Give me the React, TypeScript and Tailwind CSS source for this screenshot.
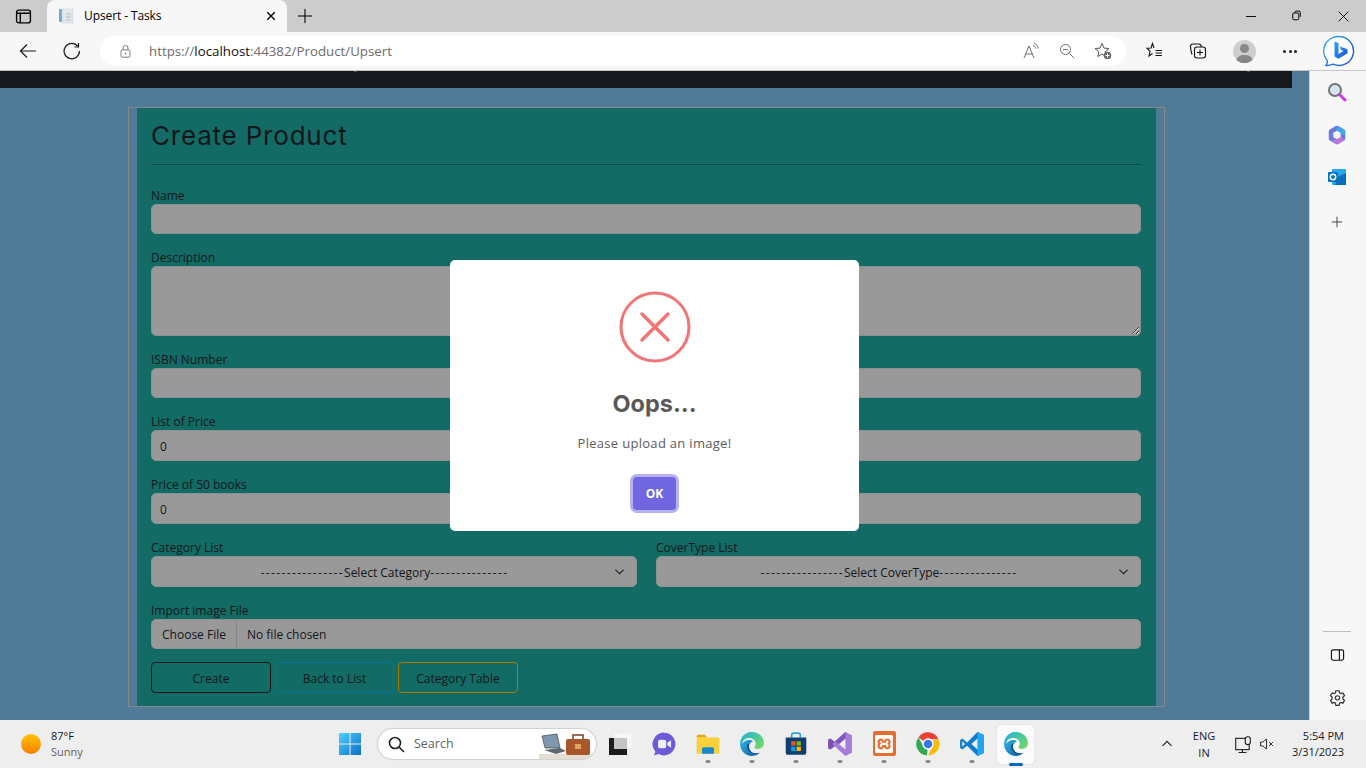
import React from "react";
import { SiXampp } from "react-icons/si";

const S = ({ size = 16, children, cls = "" }: { size?: number; children: React.ReactNode; cls?: string }) => (
  <svg width={size} height={size} viewBox="0 0 16 16" fill="none" stroke="currentColor" strokeWidth={1} className={cls}>
    {children}
  </svg>
);

function EdgeLogo({ id, size = 26 }: { id: string; size?: number }) {
  return (
    <svg width={size} height={size} viewBox="0 0 24 24">
      <defs>
        <linearGradient id={id + "a"} x1="0" y1="0" x2="1" y2="1">
          <stop offset="0" stopColor="#36c3f0" />
          <stop offset="1" stopColor="#0c59a4" />
        </linearGradient>
        <linearGradient id={id + "b"} x1="0" y1="0" x2="1" y2="1">
          <stop offset="0" stopColor="#1fb6d4" />
          <stop offset="1" stopColor="#7ddb5a" />
        </linearGradient>
      </defs>
      <path d="M12 1C5.500 1 1 6 1 12c0 6.500 5 11 10.500 11 2.800 0 5.500-1 7.500-3-3.500 1.500-8 .5-9.500-3.500-1-3 .5-6 3.500-7-3-2.500-8-1-10 2.500C4 6 8 3 12 3z" fill={`url(#${id}a)`} />
      <path d="M12 1c6.500 0 11 4.700 11 10 0 3.500-2.500 5.500-5.500 5.500-2 0-3.500-.8-3.500-1.500 0-.6 1.500-1 1.500-3.200C15.500 8.500 12 6 8.500 6.500 5.500 7 3 9.500 2.300 11.500 2.500 5.500 7 1 12 1z" fill={`url(#${id}b)`} />
      <path d="M7.500 13c-.5 5 3.500 9 8.500 8.500 1.200-.2 2.200-.7 3-1.500-3.500 1.500-8 .5-9.500-3.500-.6-1.700-.5-3 0-4.500-1 0-1.800.4-2 1z" fill="#0b4a94" />
    </svg>
  );
}

function Field({ label, children }: { label: string; children: React.ReactNode }) {
  return (
    <div className="mb-[13px]">
      <div className="h-[19px] text-[12px] leading-[21px] text-[#14161a]">{label}</div>
      {children}
    </div>
  );
}

const inputCls =
  "block h-[30px] w-full rounded-[5px] border border-[#8c9090] bg-[#999999] px-2 pt-[1px] text-[12px] text-[#14161a] outline-none";

function Select({ text }: { text: string }) {
  return (
    <div className="relative flex h-[31px] w-full items-center justify-center rounded-[5px] border border-[#8c9090] bg-[#999999] pr-[19px] pt-[2px] text-[12px] text-[#14161a]">
      <span className="tracking-[1.35px]">----------------</span>
      <span>{text}</span>
      <span className="tracking-[1.35px]">---------------</span>
      <svg width="11" height="11" viewBox="0 0 12 12" fill="none" stroke="#2b2e33" strokeWidth="1.400" className="absolute right-[11px] top-[9px]">
        <path d="M1.500 4l4.500 4.500L10.500 4" />
      </svg>
    </div>
  );
}

function Dot({ on }: { on?: boolean }) {
  return on ? (
    <span className="absolute bottom-[2px] left-1/2 h-[3px] w-[14px] -translate-x-1/2 rounded-full bg-[#0067c0]" />
  ) : (
    <span className="absolute bottom-[5px] left-1/2 h-[3px] w-[5px] -translate-x-1/2 rounded-full bg-[#8a8a8a]" />
  );
}

function Slot({ children, dot, active }: { children: React.ReactNode; dot?: boolean; active?: boolean }) {
  return (
    <div className="relative flex h-[48px] w-[44px] items-center justify-center">
      {active && <span className="absolute left-[3px] top-[5px] h-[39px] w-[37px] rounded-[4px] bg-[#fbfbfb] shadow-[0_0_1px_rgba(0,0,0,0.25)]" />}
      <span className="relative -mt-[1px] flex">{children}</span>
      {dot && <Dot />}
      {active && <Dot on />}
    </div>
  );
}

export default function App() {
  return (
    <div className="flex h-screen w-[1366px] flex-col overflow-hidden bg-[#eeeeee] font-['Open_Sans','Noto_Sans',sans-serif]">
      {/* tab strip */}
      <div className="flex h-[32px] shrink-0 items-center bg-[#cccccc] text-black">
        <div className="flex w-[47px] justify-center">
          <S size={17}>
            <rect x="1.500" y="2" width="13" height="12" rx="2" strokeWidth="1.300" />
            <path d="M1.500 5h13M5 5v9" strokeWidth="1.300" />
          </S>
        </div>
        <div className="flex h-[32px] w-[240px] items-center rounded-t-[8px] bg-[#f7f7f7] pl-[11px] pr-[10px]">
          <svg width="16" height="16" viewBox="0 0 16 16" className="shrink-0">
            <rect x="1" y="1" width="3" height="13" fill="#6fa8dc" />
            <rect x="4" y="1" width="11" height="14" fill="#e4e7ea" stroke="#c9ced3" strokeWidth="0.500" />
            <path d="M8 6h5M8 9h5M8 12h5" stroke="#b6bdc4" />
          </svg>
          <span className="ml-[10px] flex-1 text-[12px] leading-none tracking-[-0.1px]">Upsert - Tasks</span>
          <S size={12}>
            <path d="M3 3l10 10M13 3L3 13" strokeWidth="1.800" />
          </S>
        </div>
        <div className="ml-[10px] flex">
          <S size={16}>
            <path d="M8 1v14M1 8h14" strokeWidth="1.100" />
          </S>
        </div>
        <div className="ml-auto flex items-center">
          <div className="flex w-[46px] justify-center"><svg width="12" height="12" viewBox="0 0 12 12" fill="none" stroke="#111"><path d="M1 6.500h10" /></svg></div>
          <div className="flex w-[46px] justify-center pl-[1px]">
            <S size={12}>
              <rect x="1" y="4" width="8" height="9" rx="1.500" strokeWidth="1.300" />
              <path d="M4 3.500V3a1.500 1.500 0 011.500-1.500h4A1.500 1.500 0 0111 3v6" strokeWidth="1.300" />
            </S>
          </div>
          <div className="flex w-[46px] justify-center"><S size={13}><path d="M2 2l12 12M14 2L2 14" strokeWidth="1.100" /></S></div>
        </div>
      </div>

      {/* toolbar */}
      <div className="flex h-[39px] shrink-0 items-center border-b border-[#c4c4c4] bg-[#f7f7f7] text-black">
        <div className="flex w-[56px] justify-center">
          <svg width="18" height="18" viewBox="0 0 18 18" fill="none" stroke="#1b1b1b" strokeWidth="1.200">
            <path d="M17 9H1.500M8 2.500L1.500 9 8 15.500" />
          </svg>
        </div>
        <div className="flex w-[32px] justify-center">
          <svg width="18" height="18" viewBox="0 0 18 18" fill="none" stroke="#1b1b1b" strokeWidth="1.200">
            <path d="M15 4.500A7.700 7.700 0 1016.500 9" />
            <path d="M15.500 1v4h-4" />
          </svg>
        </div>
        <div className="ml-[12px] flex h-[30px] w-[1026px] items-center rounded-full bg-white">
          <div className="ml-[19px] text-[#5f5f5f]">
            <S size={13}>
              <rect x="2.500" y="6" width="11" height="9" rx="1.500" />
              <path d="M5 6V3.500a3 3 0 016 0V6" />
              <circle cx="8" cy="10.500" r="1" fill="currentColor" stroke="none" />
            </S>
          </div>
          <div className="ml-[17px] flex-1 pt-[2px] text-[13.300px] text-[#6b6b6b]">
            https://<span className="text-[#111]">localhost</span>:44382/Product/Upsert
          </div>
          <div className="flex items-center text-[#6e6e6e]">
            <svg width="18" height="16" viewBox="0 0 18 16" fill="none" stroke="currentColor">
              <path d="M1 15L6 3l5 12M2.800 11h6.400" />
              <path d="M10 2.500c1.500.3 2.500 1.500 2.700 3M11 .5c2.500.5 4 2.500 4.200 5" />
            </svg>
            <div className="ml-[18px]">
              <S size={16}>
                <circle cx="6.500" cy="6.500" r="5" />
                <path d="M10.500 10.500L15 15M4 6.500h5" />
              </S>
            </div>
            <div className="ml-[19px] mr-[14px]">
              <svg width="18" height="18" viewBox="0 0 18 18" fill="none" stroke="#555">
                <path d="M8 1.500l2 4.600 5 .4-3.800 3.300 1 4.700L8 12l-4.200 2.500 1-4.700L1 6.500l5-.4z" />
                <circle cx="13.500" cy="13.500" r="3.800" fill="#6b6b6b" stroke="none" />
                <path d="M13.500 11.500v4M11.500 13.500h4" stroke="#fff" />
              </svg>
            </div>
          </div>
        </div>
        <div className="ml-[19px]">
          <svg width="18" height="18" viewBox="0 0 18 18" fill="none" stroke="#111" strokeWidth="1.100">
            <path d="M8 6L6.500 1.500 5 6l-4 .3 3 3-1 4.700 3.500-2.500" transform="translate(1 0)" />
            <path d="M10.500 8.500H17M10.500 11H17M10.500 13.500H17" />
          </svg>
        </div>
        <div className="ml-[26px]">
          <svg width="18" height="18" viewBox="0 0 18 18" fill="none" stroke="#111" strokeWidth="1.100">
            <rect x="5.500" y="5" width="11" height="11" rx="2.500" />
            <path d="M11 7.500v6M8 10.500h6" />
            <path d="M3 12.500C2 9 1.500 6 1.500 4.500 1.500 3 2.500 2 4 2h6c1.300 0 2 .8 2.500 3" />
          </svg>
        </div>
        <div className="relative ml-[26px] h-[23px] w-[23px] overflow-hidden rounded-full bg-[#cfcdcb]">
          <span className="absolute left-[7px] top-[4px] h-[9px] w-[9px] rounded-full bg-[#8a8886]" />
          <span className="absolute left-[3px] top-[15px] h-[14px] w-[17px] rounded-full bg-[#8a8886]" />
        </div>
        <div className="ml-[27px] flex w-[14px] justify-between">
          <span className="h-[3px] w-[3px] rounded-full bg-[#222]" />
          <span className="h-[3px] w-[3px] rounded-full bg-[#222]" />
          <span className="h-[3px] w-[3px] rounded-full bg-[#222]" />
        </div>
        <div className="ml-[26px]">
          <svg width="32" height="32" viewBox="0 0 32 32">
            <defs>
              <linearGradient id="bb" x1="0" y1="0" x2="1" y2="1">
                <stop offset="0" stopColor="#2aa3f5" />
                <stop offset="1" stopColor="#1d4fd8" />
              </linearGradient>
            </defs>
            <path d="M16 1.500a14.500 14.500 0 11-6 27.700c-2 .9-4.700 1.500-7 1.300 1-1.300 1.500-3 1.300-5A14.500 14.500 0 0116 1.500z" fill="#fff" stroke="url(#bb)" strokeWidth="1.400" />
            <path d="M11.500 6.500l4 1.500v11l5-3-2.500-1.200-1.300-3.300 7.800 2.800v4l-9 5.500-4-2.200z" fill="url(#bb)" />
          </svg>
        </div>
      </div>

      {/* main */}
      <div className="flex min-h-0 flex-1">
        <div className="relative w-[1309px] bg-[#507a95]">
          <div className="relative h-[17px] w-[1292px] bg-[#16181d]">
            <span className="absolute left-[354px] top-0 h-[1px] w-[3px] rounded-b-full bg-[#5a5c60]" />
            <span className="absolute left-[1247px] top-0 h-[1px] w-[3px] rounded-b-full bg-[#5a5c60]" />
          </div>
          <div className="ml-[128px] mt-[19px] h-[600px] w-[1037px] border border-[#85898c] px-[8px]">
            <div className="h-full bg-[#126b65] pl-[14px] pr-[15px]">
              <div className="flex h-[57px] items-center border-b border-[#124845] font-['Inter','Open_Sans',sans-serif] text-[26px] leading-none tracking-[0.8px] text-[#14161a]">
                Create Product
              </div>
              <div className="h-[20px]" />
              <Field label="Name"><input readOnly className={inputCls} /></Field>
              <Field label="Description">
                <textarea readOnly className="block h-[70px] w-full rounded-[5px] border border-[#8c9090] bg-[#999999] px-2 outline-none" />
              </Field>
              <Field label="ISBN Number"><input readOnly className={inputCls} /></Field>
              <Field label="List of Price"><input readOnly value="0" className={inputCls + " h-[31px]"} /></Field>
              <Field label="Price of 50 books"><input readOnly value="0" className={inputCls + " h-[31px]"} /></Field>
              <div className="flex gap-[19px]">
                <div className="w-[486px]"><Field label="Category List"><Select text="Select Category" /></Field></div>
                <div className="w-[485px]"><Field label="CoverType List"><Select text="Select CoverType" /></Field></div>
              </div>
              <Field label="Import image File">
                <div className="flex h-[30px] items-center overflow-hidden rounded-[5px] border border-[#8c9090] bg-[#999999] text-[12px] text-[#14161a]">
                  <div className="flex h-full w-[85px] items-center justify-center border-r border-[#858888] pt-[1px]">Choose File</div>
                  <div className="ml-[10px] pt-[1px]">No file chosen</div>
                </div>
              </Field>
              <div className="flex gap-[4px] text-[12px] text-[#14161a]">
                <div className="flex h-[31px] w-[120px] items-center justify-center rounded-[4px] border border-[#14161a] pt-[2px]">Create</div>
                <div className="flex h-[31px] w-[119px] items-center justify-center rounded-[4px] border border-[#03759f] pt-[2px]">Back to List</div>
                <div className="flex h-[31px] w-[120px] items-center justify-center rounded-[4px] border border-[#ad7c00] pt-[2px]">Category Table</div>
              </div>
            </div>
          </div>

          {/* modal */}
          <div className="absolute inset-0 flex items-center justify-center">
            <div className="flex h-[271px] w-[409px] flex-col items-center rounded-[5px] bg-white">
              <svg width="72" height="72" viewBox="0 0 72 72" className="mt-[31px]" fill="none" stroke="#f27474">
                <circle cx="36" cy="36" r="34" strokeWidth="3" />
                <path d="M23 23l26 26M49 23L23 49" strokeWidth="3.500" strokeLinecap="round" />
              </svg>
              <div className="mt-[26px] font-['Inter','Open_Sans',sans-serif] text-[23.500px] font-bold leading-[30px] text-[#595959]">Oops...</div>
              <div className="mt-[14px] text-[13px] leading-[20px] tracking-[0.3px] text-[#5c5c5c]">Please upload an image!</div>
              <div className="mt-[24px] flex h-[33px] w-[43px] items-center justify-center rounded-[4px] bg-[#7066e0] pt-[1px] text-[12px] font-bold text-white shadow-[0_0_0_3px_rgba(112,102,224,0.5)]">OK</div>
            </div>
          </div>
        </div>

        {/* sidebar */}
        <div className="flex w-[57px] flex-col items-center border-l border-[#d0d0d0] bg-[#f7f7f7] pr-[2px]">
          <div className="mt-[11px] flex h-[20px] items-center">
            <svg width="20" height="20" viewBox="0 0 20 20">
              <circle cx="8" cy="8" r="6" fill="#d8e4ef" stroke="#6f7478" strokeWidth="2" />
              <path d="M12.500 12.500L18 18" stroke="#c43fe0" strokeWidth="3" strokeLinecap="round" />
            </svg>
          </div>
          <div className="mt-[23px] flex h-[20px] items-center">
            <svg width="20" height="20" viewBox="0 0 20 20" fill="none" strokeLinejoin="round">
              <path d="M10 3L16 6.500 V13.500L10 17 4 13.500V6.500z" stroke="#6b7ae0" strokeWidth="4.500" />
              <path d="M10 3L16 6.500V10" stroke="#46a8e4" strokeWidth="4.500" />
              <path d="M16 13.500L10 17 7 15" stroke="#bb78dc" strokeWidth="4.500" />
            </svg>
          </div>
          <div className="mt-[22px] flex h-[20px] items-center">
            <svg width="20" height="20" viewBox="0 0 20 20">
              <rect x="5" y="2" width="14" height="16" rx="1" fill="#28a8ea" />
              <path d="M12 9l7-3v12H8z" fill="#0a6cbd" />
              <rect x="1" y="5" width="10" height="10" rx="1" fill="#0072c6" />
              <circle cx="6" cy="10" r="2.700" fill="none" stroke="#fff" strokeWidth="1.500" />
            </svg>
          </div>
          <div className="mt-[28px] text-[#333]">
            <S size={14}><path d="M8 2v12M2 8h12" /></S>
          </div>
          <div className="mt-auto h-px w-[28px] bg-[#bdbdbd]" />
          <div className="mt-[16px] text-[#111]">
            <S size={15}>
              <rect x="1.500" y="2" width="13" height="11" rx="2" strokeWidth="1.200" />
              <path d="M10 2v11" strokeWidth="1.200" />
            </S>
          </div>
          <div className="mb-[14px] mt-[26px] text-[#333]">
            <svg width="17" height="17" viewBox="0 0 24 24" fill="none" stroke="currentColor" strokeWidth="1.700">
              <path d="M9.700 2.500h4.600l.6 3 1.700 1 3-1 2.300 4-2.300 2v2.500l2.300 2-2.300 4-3-1-1.700 1-.6 3H9.700l-.6-3-1.700-1-3 1-2.300-4 2.300-2V11.500l-2.300-2 2.300-4 3 1 1.700-1z" />
              <circle cx="12" cy="12.500" r="3" />
            </svg>
          </div>
        </div>
      </div>

      {/* taskbar */}
      <div className="flex h-[48px] shrink-0 items-center bg-[#eeeeee] text-[#1a1a1a]">
        <div className="ml-[21px] h-[20px] w-[20px] rounded-full bg-gradient-to-b from-[#ffc400] to-[#f57c00]" />
        <div className="ml-[10px] w-[277px] text-[11px] leading-[16px]">
          <div>87°F</div>
          <div className="text-[#5f5f5f]">Sunny</div>
        </div>
        <Slot>
          <svg width="24" height="24" viewBox="0 0 24 24">
            <defs>
              <linearGradient id="win" x1="0" y1="0" x2="1" y2="1">
                <stop offset="0" stopColor="#4fd0fb" />
                <stop offset="1" stopColor="#0a6fc9" />
              </linearGradient>
            </defs>
            <path d="M1 1h10.500v10.500H1zM12.500 1H23v10.500H12.500zM1 12.500h10.500V23H1zM12.500 12.500H23V23H12.500z" fill="url(#win)" />
          </svg>
        </Slot>
        <div className="ml-[6px] flex h-[30px] w-[218px] items-center overflow-hidden rounded-full bg-white shadow-[0_0_1px_1px_rgba(0,0,0,0.13)]">
          <svg width="17" height="17" viewBox="0 0 17 17" fill="none" stroke="#222" strokeWidth="1.600" className="ml-[10px]">
            <circle cx="7" cy="7" r="5.500" />
            <path d="M11 11l5 5" />
          </svg>
          <span className="ml-[9px] w-[125px] text-[12.500px] text-[#5f5f5f]">Search</span>
          <svg width="56" height="30" viewBox="0 0 56 30">
            <rect x="0" y="25" width="52" height="5" fill="#e3ddd2" />
            <path d="M3 7l15-2 3 14H6z" fill="#7f98ad" stroke="#444" strokeWidth="0.700" />
            <path d="M5 21l16-2 6 3-10 3z" fill="#5f6870" />
            <rect x="27" y="10" width="24" height="16" rx="2" fill="#a9562c" />
            <path d="M34 10V6h10v4" fill="none" stroke="#7a3f20" strokeWidth="1.500" />
            <rect x="36" y="15" width="6" height="5" fill="#e0a65a" />
          </svg>
        </div>
        <div className="ml-[2px] flex">
          <Slot>
            <svg width="24" height="24" viewBox="0 0 24 24">
              <rect x="6" y="1" width="18" height="16" fill="#f8f8f8" stroke="#e2e2e2" strokeWidth="0.500" />
              <rect x="1" y="6" width="18" height="17" fill="#1c1c1c" />
              <rect x="6" y="6" width="13" height="11" fill="#c4c4c4" />
            </svg>
          </Slot>
          <Slot>
            <svg width="26" height="26" viewBox="0 0 24 24">
              <path d="M12 1.500a10.500 10.500 0 110 21c-1.800 0-3.500-.4-5-1.200-1.500.8-3 1.200-4.500 1 1-1 1.500-2.300 1.400-3.600A10.500 10.500 0 0112 1.500z" fill="#6b5bd8" />
              <rect x="6.500" y="8" width="7.500" height="8" rx="2" fill="#eef" />
              <path d="M15 11l3.500-2.500v7L15 13z" fill="#eef" />
            </svg>
          </Slot>
          <Slot dot>
            <svg width="26" height="26" viewBox="0 0 24 24">
              <path d="M1.500 5A1.500 1.500 0 013 3.500h6l2.500 2.500H1.500z" fill="#e0a800" />
              <rect x="1.500" y="6" width="21" height="15" rx="1.500" fill="#fbd13b" />
              <path d="M8 15h8a1.500 1.500 0 011.500 1.500V21h-11v-4.500A1.500 1.500 0 018 15z" fill="#1a86d0" />
            </svg>
          </Slot>
          <Slot dot><EdgeLogo id="e1" /></Slot>
          <Slot dot>
            <svg width="26" height="26" viewBox="0 0 24 24">
              <path d="M8 6V4a2 2 0 012-2h4a2 2 0 012 2v2" fill="none" stroke="#27a3d8" strokeWidth="1.500" />
              <path d="M2.500 6h19v14a2 2 0 01-2 2h-15a2 2 0 01-2-2z" fill="#0f3f73" />
              <rect x="7.500" y="9.500" width="4" height="4" fill="#f25022" />
              <rect x="12.500" y="9.500" width="4" height="4" fill="#7fba00" />
              <rect x="7.500" y="14.500" width="4" height="4" fill="#00a4ef" />
              <rect x="12.500" y="14.500" width="4" height="4" fill="#ffb900" />
            </svg>
          </Slot>
          <Slot dot>
            <svg width="26" height="26" viewBox="0 0 24 24">
              <path d="M17 1l6 3v16l-6 3-10-9-4 3-2-1V8l2-1 4 3zM17 7l-6 5 6 5z" fill="#a67bdc" fillRule="evenodd" />
              <path d="M1 8l2-1 4 3-2 2 2 2-4 3-2-1z" fill="#7a52b3" />
              <path d="M17 1L7 10l4 2 6-5z" fill="#7d58b8" />
            </svg>
          </Slot>
          <Slot dot>
            <div className="flex h-[25px] w-[23px] items-center justify-center rounded-[2px] bg-[#e46f2e] text-white">
              <SiXampp size={18} />
            </div>
          </Slot>
          <Slot dot>
            <svg width="26" height="26" viewBox="0 0 24 24">
              <path d="M12 12L3.100 6A10.500 10.500 0 0121.600 7.500H12z" fill="#ea4335" />
              <path d="M12 22.500A10.500 10.500 0 013.100 6L8 14.500 12 12l-1 10.500z" fill="#34a853" />
              <path d="M21.600 7.500A10.500 10.500 0 0112 22.500L16 15l-1-6z" fill="#fbbc05" />
              <circle cx="12" cy="12" r="5.200" fill="#fff" />
              <circle cx="12" cy="12" r="4" fill="#3b78e7" />
            </svg>
          </Slot>
          <Slot dot>
            <svg width="26" height="26" viewBox="0 0 24 24">
              <path d="M17 1L7.500 10.500 3 7 1 8.200v7.600L3 17l4.500-3.500L17 23l6-2.800V3.800z" fill="#0f7fcb" />
              <path d="M17 1l6 2.800v16.400L17 23z" fill="#22a6f0" />
              <path d="M17 7l-5.500 5 5.500 5z" fill="#eeeeee" />
              <path d="M3 9.500L5.500 12 3 14.500z" fill="#eeeeee" />
            </svg>
          </Slot>
          <Slot active><EdgeLogo id="e2" /></Slot>
        </div>
        <div className="ml-[123px] text-[#222]">
          <S size={12}><path d="M2 10.500L8 4.500l6 6" strokeWidth="1.500" /></S>
        </div>
        <div className="ml-[16px] w-[30px] text-center text-[11px] leading-[17px]">
          <div>ENG</div>
          <div>IN</div>
        </div>
        <div className="ml-[15px] text-[#222]">
          <S size={18}>
            <rect x="1.500" y="3" width="12" height="10" />
            <path d="M7.500 13v2.500M4 15.500h7" />
            <rect x="10" y="1.500" width="4.500" height="7" rx="2" fill="#eeeeee" />
          </S>
        </div>
        <div className="ml-[7px] text-[#333]">
          <S size={16}>
            <path d="M1.500 6v4h2.500L7.500 13V3L4 6z" />
            <path d="M10 6l4 4M14 6l-4 4" />
          </S>
        </div>
        <div className="ml-auto mr-[22px] text-right text-[11px] leading-[16px]">
          <div>5:54 PM</div>
          <div>3/31/2023</div>
        </div>
      </div>
    </div>
  );
}
